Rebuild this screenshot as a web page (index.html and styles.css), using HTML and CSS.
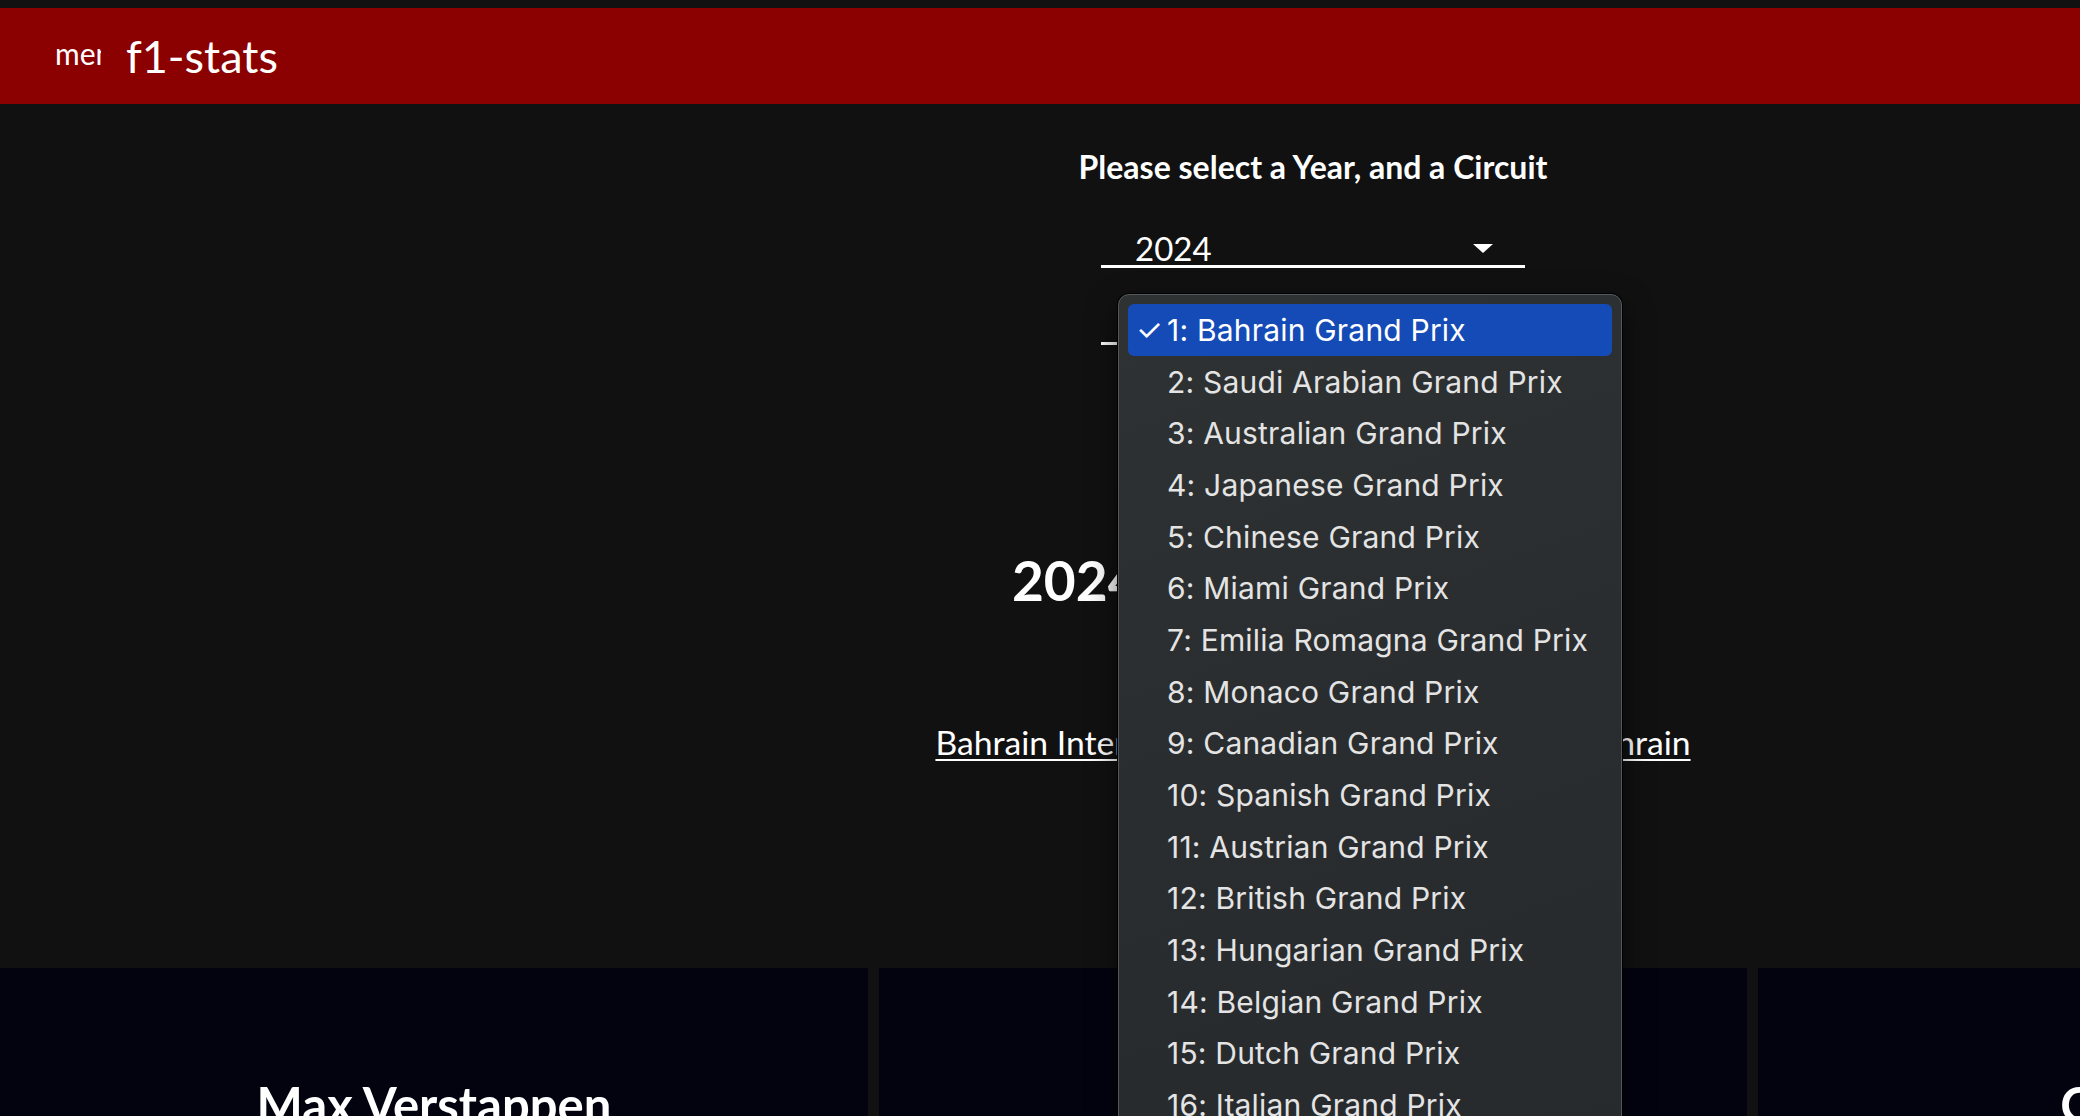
FILE: index.html
```html
<!DOCTYPE html>
<html lang="en">
<head>
<meta charset="utf-8">
<title>f1-stats</title>
<link rel="stylesheet" href="styles.css">
</head>
<body>
<header class="appbar">
  <span class="menu-icon">menu</span>
  <span class="brand">f1-stats</span>
</header>
<main class="main">
  <div class="side"></div>
  <section class="picker">
    <h2 class="prompt">Please select a Year, and a Circuit</h2>
    <div class="select year"><span class="value">2024</span><span class="caret"></span></div>
    <div class="select circuit"><span class="value">1: Bahrain Grand Prix</span><span class="caret"></span></div>
    <h1 class="race-title">2024 Bahrain Grand Prix</h1>
    <a class="circuit-link" href="#">Bahrain International Circuit, Sakhir, Zallaq, Bahrain</a>
  </section>
</main>
<section class="cards">
  <article class="card"><h3 class="driver">Max Verstappen</h3></article>
  <article class="card"><h3 class="driver">Sergio Pérez</h3></article>
  <article class="card"><h3 class="driver">Carlos Sainz</h3></article>
</section>
<div class="popup">
  <ul class="options">
    <li class="option selected"><span class="check">✓</span><span>1: Bahrain Grand Prix</span></li>
    <li class="option"><span class="check"></span><span>2: Saudi Arabian Grand Prix</span></li>
    <li class="option"><span class="check"></span><span>3: Australian Grand Prix</span></li>
    <li class="option"><span class="check"></span><span>4: Japanese Grand Prix</span></li>
    <li class="option"><span class="check"></span><span>5: Chinese Grand Prix</span></li>
    <li class="option"><span class="check"></span><span>6: Miami Grand Prix</span></li>
    <li class="option"><span class="check"></span><span>7: Emilia Romagna Grand Prix</span></li>
    <li class="option"><span class="check"></span><span>8: Monaco Grand Prix</span></li>
    <li class="option"><span class="check"></span><span>9: Canadian Grand Prix</span></li>
    <li class="option"><span class="check"></span><span>10: Spanish Grand Prix</span></li>
    <li class="option"><span class="check"></span><span>11: Austrian Grand Prix</span></li>
    <li class="option"><span class="check"></span><span>12: British Grand Prix</span></li>
    <li class="option"><span class="check"></span><span>13: Hungarian Grand Prix</span></li>
    <li class="option"><span class="check"></span><span>14: Belgian Grand Prix</span></li>
    <li class="option"><span class="check"></span><span>15: Dutch Grand Prix</span></li>
    <li class="option"><span class="check"></span><span>16: Italian Grand Prix</span></li>
    <li class="option"><span class="check"></span><span>17: Azerbaijan Grand Prix</span></li>
  </ul>
</div>
</body>
</html>
```
FILE: styles.css
```css
html {
  overflow: hidden;
}
body {
  margin: 0;
  padding-top: 8px;
  background: #111111;
  color: #ffffff;
  font-family: "Lato", "Liberation Sans", sans-serif;
}
.appbar {
  height: 96px;
  background: #8b0000;
  display: flex;
  align-items: center;
  padding-left: 55px;
  box-sizing: border-box;
}
.menu-icon {
  display: block;
  width: 46px;
  overflow: hidden;
  white-space: nowrap;
  font-size: 30px;
  line-height: 36px;
  margin-top: -6px;
}
.brand {
  margin-left: 25px;
  font-size: 45px;
  line-height: 54px;
}
.main {
  display: flex;
}
.side {
  width: 546px;
  flex: none;
}
.picker {
  flex: 1;
  display: flex;
  flex-direction: column;
  align-items: center;
}
.prompt {
  margin: 43px 0 0;
  font-size: 32px;
  line-height: 40px;
  font-weight: 700;
}
.select {
  width: 424px;
  box-sizing: border-box;
  display: flex;
  align-items: center;
  justify-content: space-between;
  padding: 0 32px 0 34px;
  border-bottom: 3px solid #ffffff;
  font-size: 33px;
  line-height: 33px;
}
.year {
  margin-top: 45px;
}
.circuit {
  margin-top: 41px;
}
.caret {
  width: 0;
  height: 0;
  border-left: 10px solid transparent;
  border-right: 10px solid transparent;
  border-top: 9px solid #ffffff;
}
.race-title {
  margin: 203px 0 0;
  font-size: 55px;
  line-height: 64px;
  font-weight: 700;
  white-space: nowrap;
}
.circuit-link {
  margin-top: 112px;
  font-size: 33.7px;
  line-height: 36px;
  color: #ffffff;
  text-decoration: underline;
  text-decoration-thickness: 2px;
  text-underline-offset: 4px;
  white-space: nowrap;
}
.cards {
  margin-top: 208px;
  display: flex;
  gap: 11px;
  overflow: hidden;
}
.card {
  flex: none;
  width: 868px;
  height: 400px;
  background: #02030f;
  padding-top: 107px;
  box-sizing: border-box;
  text-align: center;
}
.driver {
  margin: 0;
  font-size: 49px;
  line-height: 59px;
  font-weight: 700;
  white-space: nowrap;
}
.popup {
  position: absolute;
  left: 1118px;
  top: 294px;
  width: 504px;
  height: 880px;
  box-sizing: border-box;
  padding: 9px 9px;
  border: 1px solid #55585a;
  border-radius: 11px;
  background: linear-gradient(160deg, #2f3233 0%, #2a2d2f 50%, #272a2d 100%);
  box-shadow: 0 0 0 1px #000000, 0 12px 30px rgba(0, 0, 0, 0.6);
}
.options {
  list-style: none;
  margin: 0;
  padding: 0;
  font-family: "Inter", "Noto Sans", sans-serif;
  font-size: 30px;
  letter-spacing: 0.2px;
  color: #e4e4e4;
}
.option {
  height: 51.7px;
  display: flex;
  align-items: center;
  padding-left: 8px;
  border-radius: 6px;
}
.option.selected {
  background: #144bb6;
  color: #ffffff;
}
.check {
  width: 31px;
  flex: none;
  font-size: 30px;
}
```
